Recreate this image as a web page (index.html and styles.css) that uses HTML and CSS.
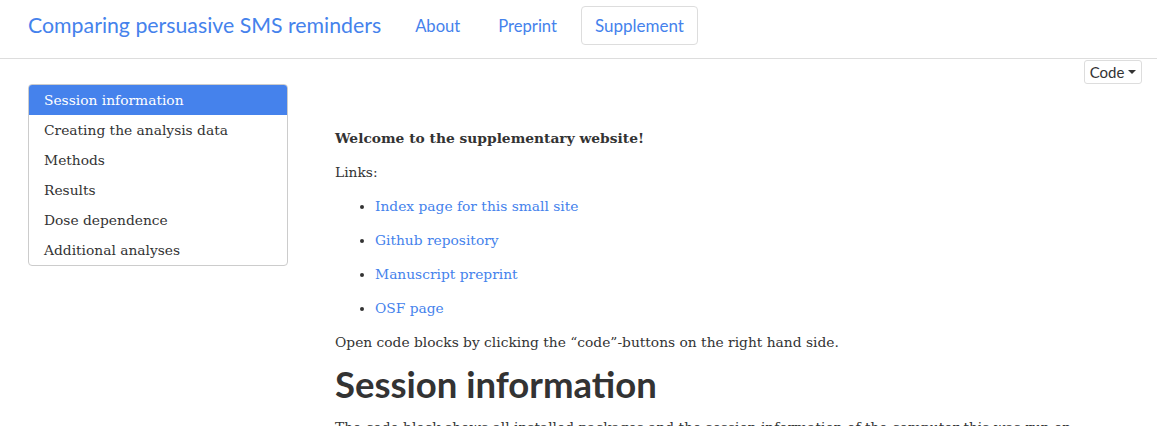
FILE: index.html
```html
<!DOCTYPE html>
<html>
<head>
<meta charset="utf-8">
<link rel="stylesheet" href="styles.css">
</head>
<body>
<nav class="navbar">
  <a class="brand">Comparing persuasive SMS reminders</a>
  <ul class="nav">
    <li><a>About</a></li>
    <li><a>Preprint</a></li>
    <li class="active"><a>Supplement</a></li>
  </ul>
</nav>
<div class="page">
  <div class="toolbar">
    <button class="code-btn">Code <span class="caret"></span></button>
  </div>
  <div class="layout">
    <aside class="toc">
      <div class="toc-item active">Session information</div>
      <div class="toc-item">Creating the analysis data</div>
      <div class="toc-item">Methods</div>
      <div class="toc-item">Results</div>
      <div class="toc-item">Dose dependence</div>
      <div class="toc-item">Additional analyses</div>
    </aside>
    <main class="main">
      <p><strong>Welcome to the supplementary website!</strong></p>
      <p>Links:</p>
      <ul class="links">
        <li><a>Index page for this small site</a></li>
        <li><a>Github repository</a></li>
        <li><a>Manuscript preprint</a></li>
        <li><a>OSF page</a></li>
      </ul>
      <p>Open code blocks by clicking the “code”-buttons on the right hand side.</p>
      <h1>Session information</h1>
      <p>The code block shows all installed packages and the session information of the computer this was run on.</p>
    </main>
  </div>
</div>
</body>
</html>
```

FILE: styles.css
```css
html, body {
  margin: 0;
  padding: 0;
  background: #fff;
}
body {
  font-family: "DejaVu Serif", Georgia, serif;
  font-size: 13.8px;
  color: #333;
  line-height: 24px;
}
.navbar {
  height: 58px;
  border-bottom: 1px solid #ddd;
  display: flex;
  align-items: flex-start;
  font-family: Lato, "Open Sans", sans-serif;
}
.brand {
  color: #4582ec;
  font-size: 21.3px;
  line-height: 24px;
  margin: 13px 20px 0 28px;
}
.nav {
  display: flex;
  list-style: none;
  margin: 6px 0 0;
  padding: 0;
}
.nav li a {
  display: block;
  color: #4582ec;
  font-size: 16.6px;
  line-height: 20px;
  padding: 9px 13px 8px;
  margin-right: 10px;
  border: 1px solid transparent;
  border-radius: 4px;
}
.nav li.active a {
  border-color: #ddd;
  padding: 9px 13px 8px;
  font-size: 17px;
}
.toolbar {
  display: flex;
  justify-content: flex-end;
  padding: 1px 15px 0 0;
}
.code-btn {
  font-family: Lato, "Open Sans", sans-serif;
  font-size: 15px;
  color: #333;
  background: #fff;
  border: 1px solid #ddd;
  border-radius: 3px;
  padding: 0 5px 0 5px;
  height: 24px;
  width: 58px;
  display: flex;
  align-items: center;
  justify-content: center;
  gap: 4px;
}
.caret {
  width: 0;
  height: 0;
  border-left: 4px solid transparent;
  border-right: 4px solid transparent;
  border-top: 4px solid #333;
}
.layout {
  display: flex;
  align-items: flex-start;
  padding-left: 28px;
}
.toc {
  width: 258px;
  border: 1px solid #ccc;
  border-radius: 4px;
  overflow: hidden;
  flex: none;
}
.toc-item {
  height: 30px;
  line-height: 30px;
  padding-left: 15px;
}
.toc-item.active {
  background: #4582ec;
  color: #fff;
}
.main {
  margin-left: 47px;
  padding-top: 42px;
}
.main p {
  margin: 0 0 10px;
}
a {
  color: #4582ec;
  text-decoration: none;
}
.links {
  margin: 0 0 10px;
  padding-left: 40px;
}
.links li {
  margin-bottom: 10px;
}
h1 {
  font-family: Lato, "Open Sans", sans-serif;
  font-weight: 700;
  font-size: 36.5px;
  margin: 3px 0 11px;
  line-height: 40px;
  color: #333;
}
```
